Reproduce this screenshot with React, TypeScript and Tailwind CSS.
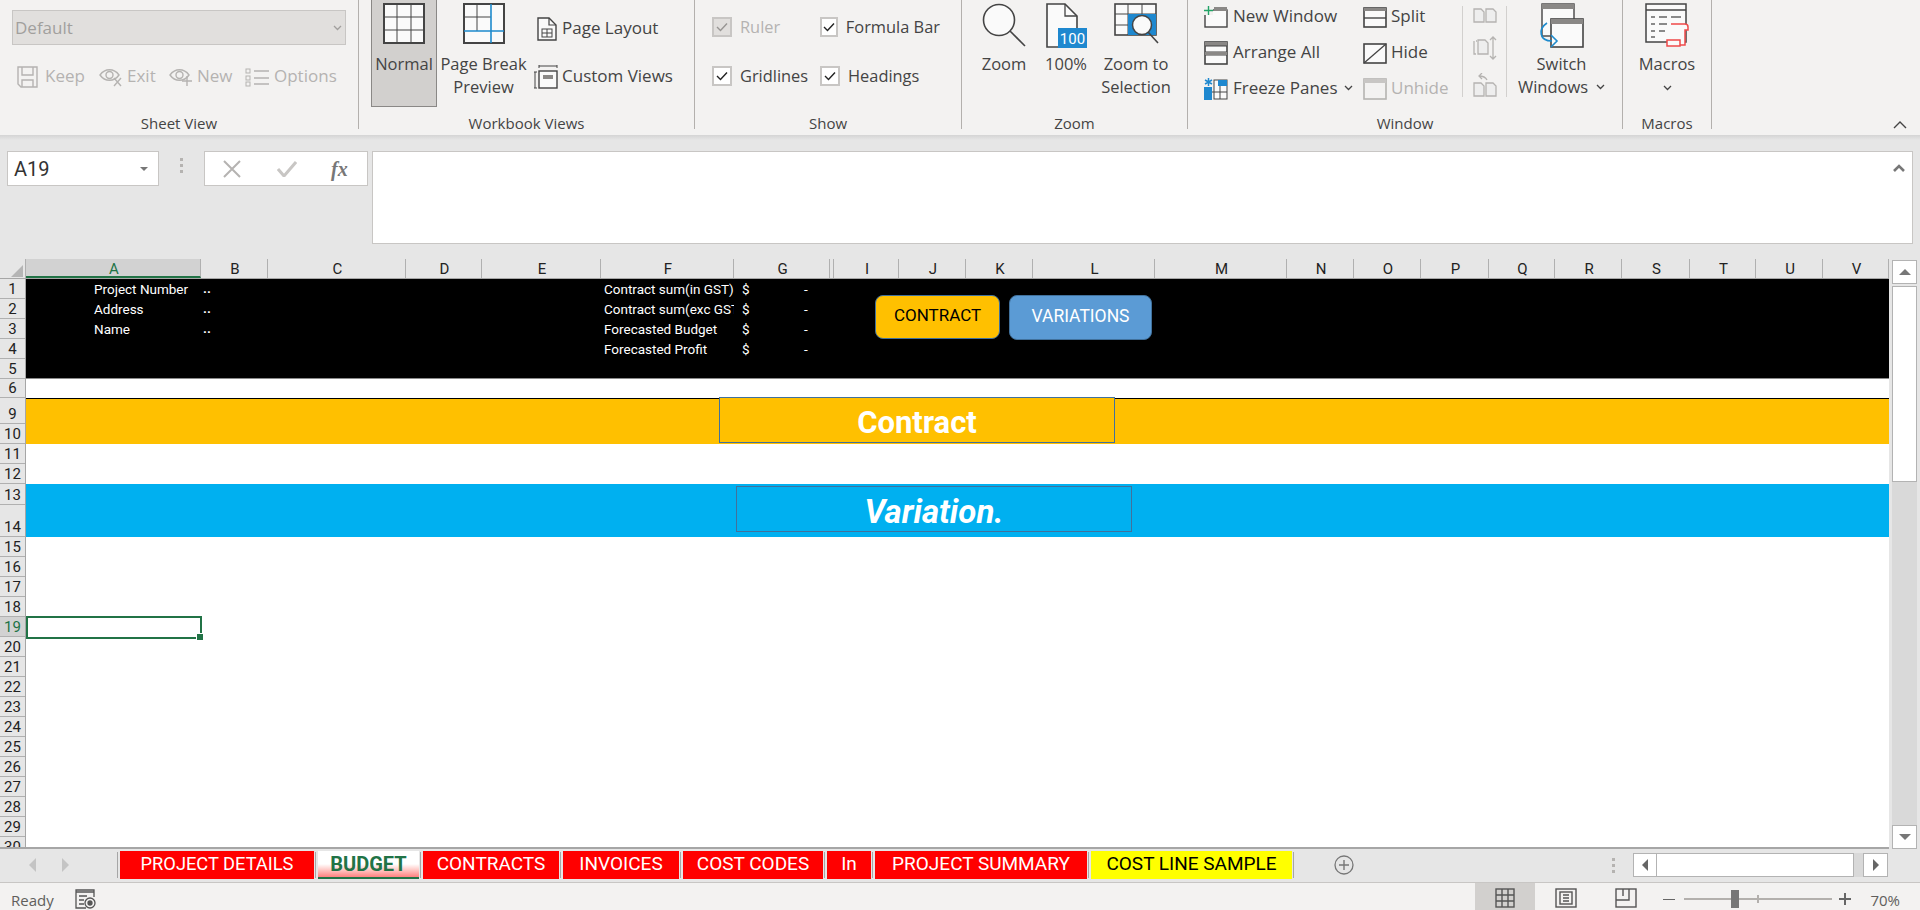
import type { ReactNode } from 'react';

const UI_FONT = "font-['Open_Sans','Noto_Sans',sans-serif]";
const SHEET_FONT = "font-['Roboto','Open_Sans',sans-serif]";
const DARK = '#444444';
const OFF = '#b5b3b1';

const COLUMNS: [string, string][] = [
  ['A', 'w-[175px]'], ['B', 'w-[67px]'], ['C', 'w-[138px]'], ['D', 'w-[76px]'], ['E', 'w-[119px]'],
  ['F', 'w-[133px]'], ['G', 'w-[96px]'], ['', 'w-[4px]'], ['I', 'w-[65px]'], ['J', 'w-[67px]'],
  ['K', 'w-[67px]'], ['L', 'w-[122px]'], ['M', 'w-[132px]'], ['N', 'w-[67px]'], ['O', 'w-[67px]'],
  ['P', 'w-[68px]'], ['Q', 'w-[66px]'], ['R', 'w-[67px]'], ['S', 'w-[68px]'], ['T', 'w-[66px]'],
  ['U', 'w-[67px]'], ['V', 'w-[66px]'],
];

const ROWS: [string, string][] = [
  ['1', 'h-[20px]'], ['2', 'h-[20px]'], ['3', 'h-[20px]'], ['4', 'h-[20px]'], ['5', 'h-[20px]'], ['6', 'h-[19px]'],
  ['9', 'h-[26px]'], ['10', 'h-[20px]'], ['11', 'h-[20px]'], ['12', 'h-[20px]'], ['13', 'h-[21px]'], ['14', 'h-[32px]'],
  ['15', 'h-[20px]'], ['16', 'h-[20px]'], ['17', 'h-[20px]'], ['18', 'h-[20px]'], ['19', 'h-[20px]'], ['20', 'h-[20px]'],
  ['21', 'h-[20px]'], ['22', 'h-[20px]'], ['23', 'h-[20px]'], ['24', 'h-[20px]'], ['25', 'h-[20px]'], ['26', 'h-[20px]'],
  ['27', 'h-[20px]'], ['28', 'h-[20px]'], ['29', 'h-[20px]'], ['30', 'h-[20px]'],
];

const TABS = [
  { name: 'PROJECT DETAILS', cls: 'w-[194px] bg-[#ff0000] text-[18.3px] text-white' },
  { name: 'BUDGET', cls: 'w-[101px] bg-gradient-to-b from-white via-white to-[#ff8080] text-[20px] font-bold text-[#217346] border-b-[2px] border-[#217346]' },
  { name: 'CONTRACTS', cls: 'w-[136px] bg-[#ff0000] text-white' },
  { name: 'INVOICES', cls: 'w-[116px] bg-[#ff0000] text-white' },
  { name: 'COST CODES', cls: 'w-[140px] bg-[#ff0000] text-white' },
  { name: 'In', cls: 'w-[44px] bg-[#ff0000] text-white' },
  { name: 'PROJECT SUMMARY', cls: 'w-[212px] bg-[#ff0000] text-white' },
  { name: 'COST LINE SAMPLE', cls: 'w-[201px] bg-[#ffff00] text-black' },
];

function Group({ label, className, children }: { label: string; className: string; children: ReactNode }) {
  return (
    <div className={`flex h-[129px] shrink-0 flex-col border-r border-[#b3b0ad] ${className}`}>
      <div className="flex h-[115px]">{children}</div>
      <div className="h-[14px] text-center text-[15px] leading-[16px] text-[#444]">{label}</div>
    </div>
  );
}

function BigButton({ icon, lines, className = '' }: { icon: ReactNode; lines: ReactNode[]; className?: string }) {
  return (
    <div className={`flex shrink-0 flex-col items-center pt-[3px] ${className}`}>
      <div className="flex h-[49px] items-start">{icon}</div>
      {lines.map((l, i) => (
        <div key={i} className="whitespace-nowrap text-[16.5px] leading-[23px] text-[#444]">{l}</div>
      ))}
    </div>
  );
}

function SmallItem({ icon, text, off, iconBox, className = '' }: { icon: ReactNode; text: ReactNode; off?: boolean; iconBox: string; className?: string }) {
  return (
    <div className={`flex h-[24px] items-center ${className}`}>
      <div className={`flex shrink-0 items-center ${iconBox}`}>{icon}</div>
      <span className={`-mt-[2px] whitespace-nowrap text-[17px] leading-[24px] ${off ? 'text-[#b5b3b1]' : 'text-[#444]'}`}>{text}</span>
    </div>
  );
}

function Check({ label, off }: { label: string; off?: boolean }) {
  return (
    <div className="flex h-[20px] items-center">
      <div className={`flex h-[20px] w-[20px] items-center justify-center border-[2px] ${off ? 'border-[#c8c6c4] bg-[#e1dfdd]' : 'border-[#c8c6c4] bg-white'}`}>
        <svg width="12" height="10" viewBox="0 0 12 10" fill="none">
          <path d="M1 5l3.5 3.5L11 1.5" stroke={off ? '#979593' : '#222'} strokeWidth="1.4" />
        </svg>
      </div>
      <span className={`ml-[8px] whitespace-nowrap text-[16.4px] ${off ? 'text-[#b5b3b1]' : 'text-[#444]'}`}>{label}</span>
    </div>
  );
}

function Chevron({ color = '#444' }: { color?: string }) {
  return (
    <svg width="9" height="6" viewBox="0 0 9 6" fill="none"><path d="M1 1l3.5 3.5L8 1" stroke={color} strokeWidth="1.3" /></svg>
  );
}

function NormalIcon() {
  return (
    <svg width="42" height="41" viewBox="0 0 42 41" fill="none">
      <rect x="1" y="1" width="40" height="39" fill="#fafafa" stroke={DARK} strokeWidth="2" />
      <path d="M14 1v39M28 1v39M1 14h40M1 27h40" stroke={DARK} strokeWidth="1" />
    </svg>
  );
}

function PageBreakIcon() {
  return (
    <svg width="42" height="41" viewBox="0 0 42 41" fill="none">
      <rect x="1" y="1" width="40" height="39" fill="#fafafa" stroke={DARK} strokeWidth="2" />
      <path d="M14 1v27M1 14h27" stroke={DARK} strokeWidth="1" />
      <path d="M28 1v39M1 28h40" stroke="#1e8bcd" strokeWidth="1.6" />
    </svg>
  );
}

function PageLayoutIcon() {
  return (
    <svg width="20" height="24" viewBox="0 0 20 24" fill="none">
      <path d="M1 1h11l7 7v15H1z" fill="#fafafa" stroke={DARK} strokeWidth="1.4" />
      <path d="M12 1v7h7" stroke={DARK} strokeWidth="1.2" />
      <rect x="5" y="12" width="10" height="8" stroke={DARK} />
      <path d="M10 12v8M5 16h10" stroke={DARK} />
    </svg>
  );
}

function CustomViewsIcon() {
  return (
    <svg width="24" height="24" viewBox="0 0 24 24" fill="none">
      <path d="M5 1h18M5 0v3M23 0v3M1 7v16M0 7h3M0 23h3" stroke={DARK} />
      <rect x="5" y="6" width="18" height="17" fill="#fafafa" stroke={DARK} strokeWidth="1.4" />
      <rect x="9" y="10" width="10" height="4" fill="#8a8886" />
    </svg>
  );
}

function ZoomIcon() {
  return (
    <svg width="44" height="44" viewBox="0 0 44 44" fill="none">
      <circle cx="17" cy="17" r="15.5" fill="#fafafa" stroke={DARK} strokeWidth="1.6" />
      <path d="M28 28l15 15" stroke={DARK} strokeWidth="1.6" />
    </svg>
  );
}

function HundredIcon() {
  return (
    <svg width="41" height="45" viewBox="0 0 41 45" fill="none">
      <path d="M1 1h18l12 12v31H1z" fill="#fafafa" stroke={DARK} strokeWidth="1.6" />
      <path d="M19 1v12h12" stroke={DARK} strokeWidth="1.3" />
      <rect x="12" y="25" width="29" height="20" fill="#1e88cf" />
      <text x="26.5" y="41" textAnchor="middle" fontSize="15" fill="#fff" fontFamily="Roboto, sans-serif">100</text>
    </svg>
  );
}

function ZoomSelectionIcon() {
  return (
    <svg width="45" height="41" viewBox="0 0 45 41" fill="none">
      <rect x="1" y="1" width="41" height="31" fill="#fafafa" stroke={DARK} strokeWidth="1.6" />
      <path d="M14 1v31M28 1v31M1 11h41M1 22h41" stroke={DARK} />
      <rect x="14" y="11" width="28" height="21" fill="#1e88cf" />
      <circle cx="28" cy="22" r="9.5" fill="#fafafa" stroke={DARK} strokeWidth="1.5" />
      <path d="M34 29l10 11" stroke={DARK} strokeWidth="1.6" />
    </svg>
  );
}

function NewWindowIcon() {
  return (
    <svg width="24" height="22" viewBox="0 0 24 22" fill="none">
      <rect x="1" y="4" width="22" height="17" fill="#fafafa" stroke={DARK} strokeWidth="1.4" />
      <rect x="10" y="1" width="13" height="4" fill="#8a8886" />
      <rect x="0" y="0" width="9" height="9" fill="#f3f2f1" />
      <path d="M4.5 0v9M0 4.5h9" stroke="#21a366" strokeWidth="1.4" />
    </svg>
  );
}

function ArrangeIcon() {
  return (
    <svg width="24" height="24" viewBox="0 0 24 24" fill="none">
      <rect x="1" y="1" width="22" height="22" fill="#fafafa" stroke={DARK} strokeWidth="1.6" />
      <rect x="1" y="1" width="22" height="4" fill="#8a8886" />
      <path d="M1 5h22M1 11h22M1 14h22" stroke={DARK} strokeWidth="1.2" />
      <rect x="1" y="11" width="22" height="3" fill="#8a8886" />
    </svg>
  );
}

function FreezeIcon() {
  return (
    <svg width="24" height="22" viewBox="0 0 24 22" fill="none">
      <rect x="10" y="2" width="13" height="19" fill="#fafafa" stroke={DARK} />
      <path d="M16 8v13M1 14h22" stroke={DARK} />
      <rect x="14" y="2" width="9" height="6" fill="#1e88cf" />
      <rect x="0" y="9" width="8" height="13" fill="#1e88cf" />
      <path d="M4.5 0v8M1 2l7 4M8 2L1 6" stroke="#1e88cf" strokeWidth="1.5" />
    </svg>
  );
}

function SplitIcon() {
  return (
    <svg width="24" height="21" viewBox="0 0 24 21" fill="none">
      <rect x="1" y="1" width="22" height="19" fill="#fafafa" stroke={DARK} strokeWidth="1.6" />
      <rect x="1" y="1" width="22" height="3" fill="#8a8886" />
      <path d="M1 11h22" stroke={DARK} strokeWidth="1.4" />
    </svg>
  );
}

function HideIcon() {
  return (
    <svg width="24" height="21" viewBox="0 0 24 21" fill="none">
      <rect x="1" y="1" width="22" height="19" fill="#fafafa" stroke={DARK} strokeWidth="1.6" />
      <path d="M1 20L23 1" stroke={DARK} strokeWidth="1.3" />
    </svg>
  );
}

function UnhideIcon() {
  return (
    <svg width="24" height="22" viewBox="0 0 24 22" fill="none">
      <rect x="1" y="1" width="22" height="20" fill="#f3f2f1" stroke={OFF} strokeWidth="1.6" />
      <rect x="1" y="1" width="22" height="4" fill="#c8c6c4" />
    </svg>
  );
}

function SideBySideIcon() {
  return (
    <svg width="24" height="15" viewBox="0 0 24 15" fill="none" stroke={OFF} strokeWidth="1.3">
      <path d="M1 1h7l3 3v10H1z" fill="#eeeeee" />
      <path d="M13 1h7l3 3v10H13z" fill="#eeeeee" />
    </svg>
  );
}

function SyncScrollIcon() {
  return (
    <svg width="24" height="24" viewBox="0 0 24 24" fill="none" stroke={OFF} strokeWidth="1.3">
      <path d="M3 5h1M1 5v13h2" />
      <path d="M5 4h7l3 3v11H5z" fill="#eeeeee" />
      <path d="M20 1v22M17 4l3-3 3 3M17 20l3 3 3-3" />
    </svg>
  );
}

function ResetPositionIcon() {
  return (
    <svg width="24" height="24" viewBox="0 0 24 24" fill="none" stroke={OFF} strokeWidth="1.3">
      <path d="M1 10h7l3 3v10H1z" fill="#eeeeee" />
      <path d="M13 10h7l3 3v10H13z" fill="#eeeeee" />
      <path d="M14 7C12 3 9 3 6 3M9 0L6 3l3 3" />
    </svg>
  );
}

function SwitchIcon() {
  return (
    <svg width="45" height="47" viewBox="0 0 45 47" fill="none">
      <rect x="3" y="1" width="32" height="32" fill="#fafafa" stroke={DARK} strokeWidth="1.4" />
      <rect x="3" y="1" width="32" height="5" fill="#8a8886" />
      <rect x="12" y="16" width="32" height="28" fill="#fafafa" stroke={DARK} strokeWidth="1.6" />
      <rect x="12" y="16" width="32" height="5" fill="#8a8886" />
      <path d="M8 20C-1 26 0 38 13 38" stroke="#1e8bcd" strokeWidth="1.6" />
      <path d="M12 32l6 6-6 6" stroke="#1e8bcd" strokeWidth="1.6" />
    </svg>
  );
}

function MacrosIcon() {
  return (
    <svg width="45" height="44" viewBox="0 0 45 44" fill="none">
      <rect x="1" y="1" width="40" height="38" fill="#fafafa" stroke={DARK} strokeWidth="1.5" />
      <path d="M1 7h40" stroke={DARK} strokeWidth="1.4" />
      <path d="M6 14h4M14 14h8M26 14h10M6 21h4M14 21h8M6 28h4M14 28h6M6 34h4" stroke="#666" strokeWidth="1.4" />
      <path d="M26 21h14a3 3 0 0 1 3 3v3h-3v15H26V37" fill="#fafafa" stroke="#f04a4a" strokeWidth="1.5" />
      <path d="M22 37h13v6H22z" fill="#fafafa" stroke="#f04a4a" strokeWidth="1.5" />
    </svg>
  );
}

function DiskIcon() {
  return (
    <svg width="21" height="22" viewBox="0 0 21 22" fill="none" stroke={OFF} strokeWidth="1.4">
      <path d="M1 1h19v20H4l-3-3z" />
      <path d="M5 1v8h11V1M5 21v-7h11v7" />
    </svg>
  );
}

function EyeIcon({ mark }: { mark: 'x' | 'plus' }) {
  return (
    <svg width="24" height="20" viewBox="0 0 24 20" fill="none" stroke={OFF} strokeWidth="1.4">
      <path d="M1 8c5-7 14-7 19 0-5 7-14 7-19 0z" />
      <circle cx="10.5" cy="8" r="3.5" />
      {mark === 'x' ? <path d="M15 11l7 8M22 11l-7 8" /> : <path d="M18 9v10M13 14h10" />}
    </svg>
  );
}

function OptionsIcon() {
  return (
    <svg width="24" height="20" viewBox="0 0 24 20" fill="none">
      <rect x="1" y="2" width="4" height="4" stroke={OFF} />
      <rect x="1" y="9" width="4" height="4" stroke={OFF} />
      <rect x="1" y="15" width="4" height="4" stroke={OFF} />
      <path d="M9 4h15M9 11h15M9 17h15" stroke={OFF} strokeWidth="1.5" />
    </svg>
  );
}

function Ribbon() {
  return (
    <div className={`flex h-[135px] shrink-0 bg-[#f3f2f1] ${UI_FONT}`}>
      <Group label="Sheet View" className="w-[359px]">
        <div className="flex flex-col pl-[12px] pt-[10px]">
          <div className="flex h-[35px] w-[334px] items-center justify-between border border-[#c8c6c4] bg-[#e1dfdd] pl-[2px] pr-[3px] text-[17px] text-[#a19f9d]">
            Default
            <Chevron color="#a19f9d" />
          </div>
          <div className="mt-[20px] flex pl-[5px]">
            <SmallItem className="w-[82px]" iconBox="w-[28px]" icon={<DiskIcon />} text="Keep" off />
            <SmallItem className="w-[70px]" iconBox="w-[28px]" icon={<EyeIcon mark="x" />} text="Exit" off />
            <SmallItem className="w-[76px]" iconBox="w-[28px]" icon={<EyeIcon mark="plus" />} text="New" off />
            <SmallItem iconBox="w-[29px]" icon={<OptionsIcon />} text="Options" off />
          </div>
        </div>
      </Group>

      <Group label="Workbook Views" className="w-[336px]">
        <div className="ml-[12px] h-[107px] w-[66px] border border-t-0 border-[#8a8886] bg-[#d2d0ce]">
          <BigButton icon={<NormalIcon />} lines={['Normal']} />
        </div>
        <BigButton className="ml-[2px] w-[89px]" icon={<PageBreakIcon />} lines={['Page Break', 'Preview']} />
        <div className="ml-[6px] flex flex-col gap-[24px] pt-[17px]">
          <SmallItem iconBox="w-[28px] pl-[3px]" icon={<PageLayoutIcon />} text="Page Layout" />
          <SmallItem iconBox="w-[28px]" icon={<CustomViewsIcon />} text="Custom Views" />
        </div>
      </Group>

      <Group label="Show" className="w-[267px]">
        <div className="grid h-fit grid-cols-[108px_120px] gap-y-[29px] pl-[17px] pt-[17px]">
          <Check label="Ruler" off />
          <Check label="Formula Bar" />
          <Check label="Gridlines" />
          <Check label="Headings" />
        </div>
      </Group>

      <Group label="Zoom" className="w-[226px]">
        <div className="flex pl-[14px]">
          <BigButton className="w-[56px]" icon={<ZoomIcon />} lines={['Zoom']} />
          <BigButton className="ml-[8px] w-[52px]" icon={<HundredIcon />} lines={['100%']} />
          <BigButton className="ml-[8px] w-[72px]" icon={<ZoomSelectionIcon />} lines={['Zoom to', 'Selection']} />
        </div>
      </Group>

      <Group label="Window" className="w-[435px]">
        <div className="flex">
          <div className="ml-[16px] flex w-[159px] flex-col gap-[12px] pt-[5px]">
            <SmallItem iconBox="w-[29px]" icon={<NewWindowIcon />} text="New Window" />
            <SmallItem iconBox="w-[29px]" icon={<ArrangeIcon />} text="Arrange All" />
            <SmallItem
              iconBox="w-[29px]"
              icon={<FreezeIcon />}
              text={<span className="flex items-center gap-[6px]">Freeze Panes <Chevron /></span>}
            />
          </div>
          <div className="flex w-[99px] flex-col gap-[12px] pt-[5px]">
            <SmallItem iconBox="w-[28px]" icon={<SplitIcon />} text="Split" />
            <SmallItem iconBox="w-[28px]" icon={<HideIcon />} text="Hide" />
            <SmallItem iconBox="w-[28px]" icon={<UnhideIcon />} text="Unhide" off />
          </div>
          <div className="mt-[6px] flex h-[91px] w-[45px] flex-col items-center justify-between border-x border-[#d2d0ce] pb-0 pt-[2px]">
            <SideBySideIcon />
            <SyncScrollIcon />
            <ResetPositionIcon />
          </div>
          <BigButton
            className="w-[109px]"
            icon={<SwitchIcon />}
            lines={['Switch', <span key="w" className="flex items-center gap-[8px]">Windows <Chevron /></span>]}
          />
        </div>
      </Group>

      <Group label="Macros" className="w-[89px]">
        <BigButton className="w-full" icon={<MacrosIcon />} lines={['Macros', <span key="c" className="flex h-[25px] items-center justify-center"><Chevron /></span>]} />
      </Group>

      <div className="flex flex-1 items-end justify-end pb-[6px] pr-[13px]">
        <svg width="14" height="8" viewBox="0 0 14 8" fill="none"><path d="M1 7l6-6 6 6" stroke="#444" strokeWidth="1.4" /></svg>
      </div>
    </div>
  );
}

function FormulaBar() {
  return (
    <div className="h-[124px] shrink-0 bg-[#e6e6e6]">
      <div className="h-[5px] bg-gradient-to-b from-[#d4d4d4] to-[#e6e6e6]" />
      <div className="mt-[11px] flex h-[93px] pl-[7px] pr-[7px]">
        <div className={`flex h-[35px] w-[152px] items-center justify-between border border-[#c8c6c4] bg-white pl-[6px] pr-[10px] text-[20px] text-[#333] ${SHEET_FONT}`}>
          A19
          <div className="h-0 w-0 border-x-[4px] border-t-[4px] border-x-transparent border-t-[#777]" />
        </div>
        <div className="flex w-[45px] flex-col items-center justify-center gap-[3px] self-start pt-[7px]">
          <div className="h-[3px] w-[3px] bg-[#b5b3b1]" />
          <div className="h-[3px] w-[3px] bg-[#b5b3b1]" />
          <div className="h-[3px] w-[3px] bg-[#b5b3b1]" />
        </div>
        <div className="flex h-[35px] w-[164px] items-center border border-[#c8c6c4] bg-white pl-[18px]">
          <svg width="18" height="18" viewBox="0 0 18 18" fill="none"><path d="M1 1l16 16M17 1L1 17" stroke="#b5b3b1" strokeWidth="2" /></svg>
          <svg className="ml-[36px]" width="20" height="16" viewBox="0 0 20 16" fill="none"><path d="M1 8l6 7L19 1" stroke="#c8c6c4" strokeWidth="3" /></svg>
          <span className="ml-[34px] font-['Liberation_Serif',serif] text-[20px] font-bold italic leading-none text-[#777]">fx</span>
        </div>
        <div className="ml-[4px] flex h-[93px] flex-1 justify-end border border-[#c8c6c4] bg-white pr-[7px] pt-[12px]">
          <svg width="12" height="8" viewBox="0 0 12 8" fill="none"><path d="M1 7l5-5 5 5" stroke="#777" strokeWidth="2.6" /></svg>
        </div>
      </div>
    </div>
  );
}

function SummaryRow({ label, value, money }: { label?: string; value?: string; money?: string }) {
  return (
    <div className="flex h-[20px] items-center text-[13.5px] text-white">
      <div className="w-[175px] shrink-0 pl-[68px]">{label}</div>
      <div className="w-[400px] shrink-0 pl-[2px] font-bold leading-none">{value}</div>
      <div className="w-[133px] shrink-0 overflow-hidden whitespace-nowrap pl-[3px]">{money}</div>
      {money && <div className="w-[70px] pl-[8px]">$</div>}
      {money && <div>-</div>}
    </div>
  );
}

function SheetBody() {
  return (
    <div className={`relative flex-1 overflow-hidden bg-white ${SHEET_FONT}`}>
      <div className="h-[100px] border-b border-[#8a8a8a] bg-black">
        <SummaryRow label="Project Number" value=".." money="Contract sum(in GST)" />
        <SummaryRow label="Address" value=".." money="Contract sum(exc GST)" />
        <SummaryRow label="Name" value=".." money="Forecasted Budget" />
        <SummaryRow money="Forecasted Profit" />
      </div>
      <div className="h-[19px]" />
      <div className="h-[46px] border-t border-black bg-[#ffc000]" />
      <div className="h-[40px]" />
      <div className="h-[53px] bg-[#00b0f0]" />

      <div className="absolute left-[849px] top-[16px] flex h-[44px] w-[125px] items-start justify-center rounded-[8px] border border-[#41719c] bg-[#ffc000] pt-[7px] text-[17px] text-black">
        CONTRACT
      </div>
      <div className="absolute left-[983px] top-[16px] flex h-[45px] w-[143px] items-start justify-center rounded-[8px] border border-[#41719c] bg-[#5b9bd5] pt-[7px] text-[17.5px] text-white">
        VARIATIONS
      </div>
      <div className="absolute left-[693px] top-[118px] flex h-[46px] w-[396px] items-center justify-center border border-[#41719c] bg-[#ffc000] pt-[6px] text-[31px] font-bold text-white">
        Contract
      </div>
      <div className="absolute left-[710px] top-[207px] flex h-[46px] w-[396px] items-center justify-center border border-[#41719c] bg-[#00b0f0] pt-[5px] text-[33px] font-bold italic text-white">
        Variation.
      </div>
      <div className="absolute left-0 top-[337px] h-[23px] w-[176px] border-[2px] border-[#217346]" />
      <div className="absolute left-[171px] top-[355px] h-[6px] w-[6px] bg-[#217346] outline outline-1 outline-white" />
    </div>
  );
}

function Sheet() {
  return (
    <div className="flex h-[590px] shrink-0 bg-[#e6e6e6]">
      <div className="flex w-[1889px] shrink-0 flex-col border-b-[2px] border-[#a6a6a6]">
        <div className={`flex h-[20px] shrink-0 border-b border-[#a6a6a6] text-[15px] leading-[20px] ${SHEET_FONT}`}>
          <div className="flex w-[26px] shrink-0 items-end justify-end border-r border-[#b0b0b0] pb-[1px] pr-[2px]">
            <div className="h-0 w-0 border-b-[12px] border-l-[12px] border-b-[#b5b5b5] border-l-transparent" />
          </div>
          {COLUMNS.map(([name, width]) => (
            <div
              key={name || 'hidden'}
              className={`shrink-0 border-r border-[#b0b0b0] text-center ${name ? 'pl-[2px]' : ''} ${width} ${name === 'A' ? 'border-b-[2px] border-b-[#217346] bg-[#d2d2d2] text-[#217346]' : 'text-[#222]'}`}
            >
              {name}
            </div>
          ))}
        </div>
        <div className="flex min-h-0 flex-1">
          <div className={`w-[26px] shrink-0 overflow-hidden border-r border-[#a6a6a6] text-[15px] ${SHEET_FONT}`}>
            {ROWS.map(([name, height]) => (
              <div
                key={name}
                className={`flex items-end justify-center border-b border-[#b0b0b0] leading-[17px] ${height} ${name === '19' ? 'bg-[#d2d2d2] text-[#217346]' : 'text-[#222]'}`}
              >
                {name}
              </div>
            ))}
          </div>
          <SheetBody />
        </div>
      </div>
      <div className="ml-[3px] flex h-[590px] w-[25px] flex-col">
        <div className="mt-px flex h-[24px] shrink-0 items-center justify-center border border-[#b3b3b3] bg-white">
          <div className="h-0 w-0 border-x-[6px] border-b-[6px] border-x-transparent border-b-[#777]" />
        </div>
        <div className="mt-[2px] h-[196px] shrink-0 border border-[#b3b3b3] bg-white" />
        <div className="flex-1 bg-[#d9d9d9]" />
        <div className="flex h-[24px] shrink-0 items-center justify-center border border-[#b3b3b3] bg-white">
          <div className="h-0 w-0 border-x-[6px] border-t-[6px] border-x-transparent border-t-[#777]" />
        </div>
      </div>
    </div>
  );
}

function TabBar() {
  return (
    <div className="flex h-[34px] shrink-0 border-b border-[#c8c6c4] bg-[#e6e6e6] pt-[2px]">
      <div className="flex w-[117px] shrink-0 items-center gap-[26px] pb-[3px] pl-[29px]">
        <div className="h-0 w-0 border-y-[7px] border-r-[7px] border-y-transparent border-r-[#c4c4c4]" />
        <div className="h-0 w-0 border-y-[7px] border-l-[7px] border-y-transparent border-l-[#c4c4c4]" />
      </div>
      <div className={`flex h-[28px] items-start text-[19px] leading-[26px] ${SHEET_FONT}`}>
        {TABS.map((tab) => (
          <div key={tab.name} className="flex h-[28px]">
            <div className="mr-[2px] h-[26px] w-[1px] self-center bg-[#a6a6a6]" />
            <div className={`h-[28px] text-center ${tab.cls}`}>{tab.name}</div>
            <div className="w-[1px]" />
          </div>
        ))}
        <div className="mr-[2px] h-[26px] w-[1px] self-center bg-[#a6a6a6]" />
      </div>
      <div className="ml-[38px] flex h-[28px] items-center">
        <svg width="20" height="20" viewBox="0 0 20 20" fill="none">
          <circle cx="10" cy="10" r="9" stroke="#777" strokeWidth="1.3" />
          <path d="M10 5v10M5 10h10" stroke="#777" strokeWidth="1.4" />
        </svg>
      </div>
      <div className="ml-[258px] flex h-[28px] flex-col justify-center gap-[3px]">
        <div className="h-[3px] w-[3px] bg-[#b5b3b1]" />
        <div className="h-[3px] w-[3px] bg-[#b5b3b1]" />
        <div className="h-[3px] w-[3px] bg-[#b5b3b1]" />
      </div>
      <div className="ml-[18px] mt-[2px] flex h-[24px] w-[255px] bg-[#d9d9d9]">
        <div className="flex w-[24px] items-center justify-center border border-[#b3b3b3] bg-white">
          <div className="h-0 w-0 border-y-[6px] border-r-[6px] border-y-transparent border-r-[#666]" />
        </div>
        <div className="w-[197px] border border-l-0 border-[#b3b3b3] bg-white" />
        <div className="ml-auto flex w-[25px] items-center justify-center border border-[#b3b3b3] bg-white">
          <div className="h-0 w-0 border-y-[6px] border-l-[6px] border-y-transparent border-l-[#666]" />
        </div>
      </div>
    </div>
  );
}

function StatusBar() {
  return (
    <div className={`flex h-[27px] flex-1 items-end bg-[#f3f2f1] text-[15px] leading-[20px] text-[#605e5c] ${UI_FONT}`}>
      <span className="ml-[11px]">Ready</span>
      <svg className="ml-[21px] mb-[1px]" width="22" height="20" viewBox="0 0 22 20" fill="none" stroke="#555" strokeWidth="1.3">
        <path d="M1 1h18v2H1zM1 3v16h10M19 3v5" />
        <path d="M4 7h8M4 11h5M4 15h5" />
        <circle cx="15" cy="14" r="5" fill="#f3f2f1" />
        <circle cx="15" cy="14" r="2" fill="#555" />
      </svg>
      <div className="ml-auto flex h-full w-[60px] items-end justify-center bg-[#d2d0ce] pb-[2px]">
        <svg width="20" height="20" viewBox="0 0 20 20" fill="none" stroke="#555" strokeWidth="1.4">
          <rect x="1" y="1" width="18" height="18" />
          <path d="M7 1v18M13 1v18M1 7h18M1 13h18" />
        </svg>
      </div>
      <div className="flex h-full w-[61px] items-end justify-center pb-[2px]">
        <svg width="22" height="20" viewBox="0 0 22 20" fill="none" stroke="#555" strokeWidth="1.4">
          <rect x="1" y="1" width="20" height="18" />
          <rect x="5" y="4" width="12" height="12" />
          <path d="M8 7h6M8 10h6M8 13h6" />
        </svg>
      </div>
      <div className="flex h-full w-[60px] items-end justify-center pb-[2px]">
        <svg width="22" height="20" viewBox="0 0 22 20" fill="none" stroke="#555" strokeWidth="1.4">
          <rect x="1" y="1" width="20" height="18" />
          <path d="M1 12h13V1M8 1v7" />
        </svg>
      </div>
      <div className="mb-[10px] ml-[7px] h-[1.5px] w-[12px] bg-[#666]" />
      <div className="relative mb-[10px] ml-[9px] flex h-[2px] w-[148px] bg-[#b3b0ad]">
        <div className="absolute left-[47px] top-[-8px] h-[18px] w-[8px] bg-[#777]" />
        <div className="absolute left-[73px] top-[-3px] h-[8px] w-[2px] bg-[#b3b0ad]" />
      </div>
      <div className="relative mb-[5px] ml-[7px] h-[12px] w-[12px]">
        <div className="absolute left-0 top-[5px] h-[1.5px] w-[12px] bg-[#666]" />
        <div className="absolute left-[5px] top-0 h-[12px] w-[1.5px] bg-[#666]" />
      </div>
      <span className="ml-[19px] mr-[20px]">70%</span>
    </div>
  );
}

export default function App() {
  return (
    <div className="flex h-[910px] w-[1920px] flex-col overflow-hidden bg-white">
      <Ribbon />
      <FormulaBar />
      <Sheet />
      <TabBar />
      <StatusBar />
    </div>
  );
}
